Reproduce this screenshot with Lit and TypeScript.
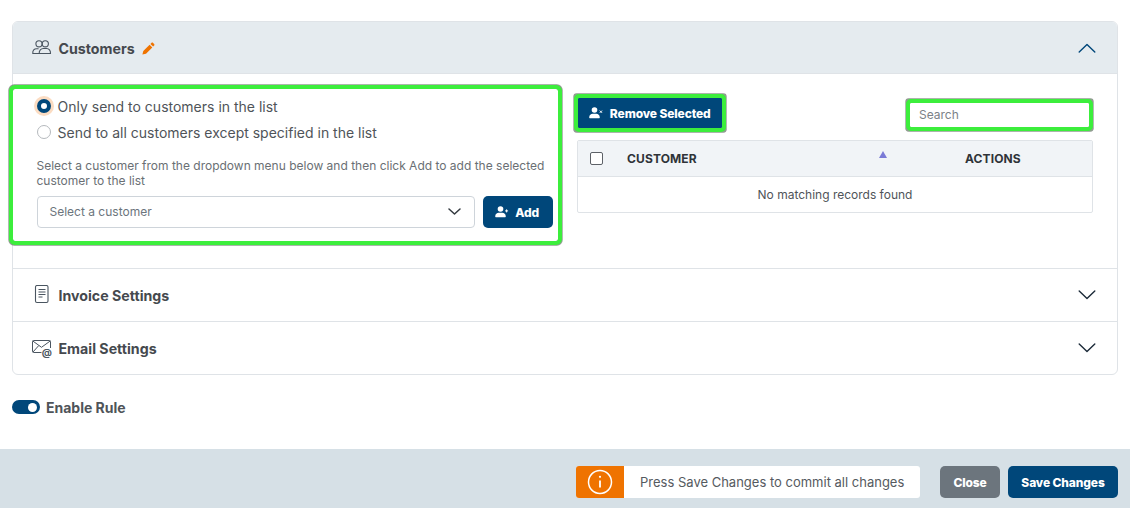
import { LitElement, html, css, svg } from "lit";
import { customElement } from "lit/decorators.js";

const chevron = (up: boolean, cls: string) => html`<svg class=${cls} width="18" height="10" viewBox="0 0 18 10" fill="none" stroke="currentColor" stroke-width="1.4" stroke-linecap="round" stroke-linejoin="round"><path d=${up ? "M1.2 9 9 1.4 16.8 9" : "M1.2 1 9 8.6 16.8 1"}></path></svg>`;

const userBase = svg`<circle cx="5.500" cy="3" r="2.800"></circle><path d="M0.200 10.600c0-2.600 1.800-3.800 3.400-3.800h3.800c1.600 0 3.400 1.200 3.400 3.800 0 .4-.3.600-.6.600H.8c-.3 0-.6-.2-.6-.6z"></path>`;
const userPlus = html`<svg class="bi" width="14" height="12" viewBox="0 0 14 12" fill="#fff">${userBase}<path d="M11.600 3.400v3M10.100 4.900h3" stroke="#fff" stroke-width="1"></path></svg>`;
const userX = html`<svg class="bi" width="14" height="12" viewBox="0 0 14 12" fill="#fff">${userBase}<path d="M10.800 3.600l2.200 2.200M13 3.600l-2.200 2.200" stroke="#fff" stroke-width="1"></path></svg>`;

@customElement("app-root")
export class AppRoot extends LitElement {
  static styles = css`
    :host { display: block; width: 1130px; height: 508px; overflow: hidden; background: #fff; font-family: Inter, "Liberation Sans", sans-serif; color: #4a4f55; box-sizing: border-box; }
    * { box-sizing: border-box; }
    .page { display: flex; flex-direction: column; height: 508px; padding-top: 21px; }
    .card { margin: 0 12px; height: 354px; border: 1px solid #dfe3e7; border-radius: 6px; display: flex; flex-direction: column; }
    .acc { height: 53px; flex: none; display: flex; align-items: center; padding: 0 21px 0 19px; border-top: 1px solid #dfe3e7; font-size: 14.2px; font-weight: 700; color: #45494e; }
    .acc.first { height: 52px; border-top: 0; padding-top: 1px; background: #e5ebef; border-bottom: 1px solid #dfe3e7; border-radius: 5px 5px 0 0; }
    .acc.last { border-bottom: 0; }
    .acc .ic { width: 20px; height: 20px; margin-right: 6.5px; flex: none; }
    .pencil { margin-left: 7px; }
    .chev { margin-left: auto; color: #1c2b39; }
    .chev.open { color: #00477a; }
    .body { height: 194px; flex: none; display: flex; align-items: flex-start; padding: 11px 24px 0 0; }
    .hl { outline: 4px solid #3cee3c; outline-offset: 0; box-shadow: 0 0 0 4.7px rgba(70, 90, 70, 0.6); border-radius: 2px; }
    .left { width: 545px; height: 152px; margin: 4px 0 0 0; padding: 4px 5px 0 23.5px; flex: none; }
    .radio { display: flex; align-items: center; height: 26px; font-size: 14px; color: #4f5459; }
    .dot { width: 14px; height: 14px; border-radius: 50%; border: 1px solid #b5b9bd; margin-right: 7px; flex: none; background: #fff; }
    .dot.on { border: 4px solid #00477a; box-shadow: 0 0 0 3px #fbdcc2; }
    .hint { font-size: 12px; line-height: 15px; color: #6a6f74; margin-top: 13px; }
    .sel-row { display: flex; gap: 8px; margin-top: 8px; }
    .select { flex: 1; height: 32px; border: 1px solid #ced4da; border-radius: 4px; display: flex; align-items: center; padding: 0 13px 1px 12px; font-size: 12px; color: #6c757d; }
    .select .chev2 { margin-left: auto; color: #343a40; width: 13px; height: 7px; }
    .btn { border: 0; background: #00477a; color: #fff; font: 800 12px Inter, "Liberation Sans", sans-serif; letter-spacing: -0.01em; border-radius: 5px; display: flex; align-items: center; justify-content: center; height: 32px; padding: 0; }
    .btn .bi { margin-right: 6.500px; }
    .add { width: 70px; padding-right: 2px; }
    .right { flex: 1; margin-left: 16px; margin-top: 13px; }
    .tools { display: flex; justify-content: space-between; align-items: flex-start; height: 30px; margin-left: 4px; margin-right: 4px; }
    .rm { width: 144px; height: 30px; border-radius: 1px; }
    .search { width: 179px; height: 24px; margin-top: 5px; display: flex; align-items: center; padding: 0 9px 2px; font-size: 12px; color: #7b8187; background: #fff; border-radius: 1px; }
    .table { margin-top: 12px; border: 1px solid #dfe3e7; border-radius: 2px; margin-left: 3px; }
    .thead { height: 36px; background: #f1f4f7; border-bottom: 1px solid #dfe3e7; display: flex; align-items: center; font-size: 12px; font-weight: 700; color: #2f3338; }
    .check { width: 13px; height: 13px; border: 1px solid #5d6167; border-radius: 2px; background: #fff; margin-left: 12px; flex: none; }
    .th1 { margin-left: 24px; width: 338px; letter-spacing: .01em; display: flex; justify-content: flex-end; align-self: stretch; }
    .th1 span { margin-right: auto; align-self: center; }
    .tri { width: 0; height: 0; border-left: 4.5px solid transparent; border-right: 4.5px solid transparent; border-bottom: 7px solid #7a7ad6; margin: 10px 78px 0 0; }
    .th2 { letter-spacing: .01em; }
    .empty { height: 35px; display: flex; align-items: center; justify-content: center; font-size: 12px; color: #4f5459; }
    .enable { display: flex; align-items: center; margin: 24px 12px 0; height: 16px; font-size: 14px; font-weight: 700; color: #4f5459; }
    .toggle { width: 28px; height: 14px; border-radius: 7px; background: #00477a; margin-right: 6px; display: flex; justify-content: flex-end; align-items: center; padding-right: 3px; }
    .toggle i { width: 9px; height: 9px; background: #fff; border-radius: 50%; }
    .footer { margin-top: auto; height: 59px; background: #d6e0e6; display: flex; align-items: center; justify-content: flex-end; padding: 7px 12px 0 0; gap: 8px; }
    .alert { height: 32px; width: 344px; display: flex; border-radius: 3px; overflow: hidden; background: #fff; margin-right: 12px; font-size: 13px; color: #555a60; align-items: center; }
    .alert .o { width: 48px; height: 32px; background: #ef7300; display: flex; align-items: center; justify-content: center; margin-right: 16px; }
    .close { width: 60px; background: #6c757d; }
    .save { width: 110px; }
  `;

  render() {
    return html`
      <div class="page">
        <div class="card">
          <div class="acc first">
            <svg class="ic" viewBox="0 0 20 20" fill="none" stroke="#4a5560" stroke-width="1.1"><circle cx="7" cy="5.800" r="3.100"></circle><circle cx="13.300" cy="5.800" r="3.100"></circle><path d="M7.200 15.500H.8c-.3-3 1.500-4.800 3.800-4.800h2"></path><path d="M7.200 15.500h11.300c.2-3-1.600-5-3.800-5h-3.400c-2.300 0-4.300 2-4.100 5z"></path></svg>
            Customers
            <svg class="pencil" width="13" height="13" viewBox="0 0 13 13" fill="#ef7300"><path d="M0.400 12.600l.9-3.600 6.300-6.300 2.700 2.700-6.300 6.300zM8.400 1.900l1-1c.5-.5 1.200-.5 1.700 0l1 1c.5.5.5 1.200 0 1.700l-1 1z"></path></svg>
            ${chevron(true, "chev open")}
          </div>
          <div class="body">
            <div class="left hl">
              <div class="radio"><span class="dot on"></span>Only send to customers in the list</div>
              <div class="radio"><span class="dot"></span>Send to all customers except specified in the list</div>
              <div class="hint">Select a customer from the dropdown menu below and then click Add to add the selected customer to the list</div>
              <div class="sel-row">
                <div class="select">Select a customer
                  <svg class="chev2" viewBox="0 0 13 7" fill="none" stroke="currentColor" stroke-width="1.5" stroke-linecap="round" stroke-linejoin="round"><path d="M1 1l5.500 5L12 1"></path></svg>
                </div>
                <button class="btn add">${userPlus}Add</button>
              </div>
            </div>
            <div class="right">
              <div class="tools">
                <button class="btn rm hl">${userX}Remove Selected</button>
                <div class="search hl">Search</div>
              </div>
              <div class="table">
                <div class="thead">
                  <span class="check"></span>
                  <div class="th1"><span>CUSTOMER</span><i class="tri"></i></div>
                  <div class="th2">ACTIONS</div>
                </div>
                <div class="empty">No matching records found</div>
              </div>
            </div>
          </div>
          <div class="acc">
            <svg class="ic" viewBox="0 0 20 20" fill="none" stroke="#4a5560" stroke-width="1.100"><rect x="3.500" y="0.500" width="12.500" height="17" rx="1.500"></rect><path d="M6.500 4.500h7M6.500 7h7M6.500 9.500h7M6.500 12h4" stroke-width="1"></path></svg>
            Invoice Settings
            ${chevron(false, "chev")}
          </div>
          <div class="acc last">
            <svg class="ic" viewBox="0 0 20 20" fill="none" stroke="#4a5560" stroke-width="1"><path d="M9.500 14.500H1.500a1 1 0 0 1-1-1V3.500a1 1 0 0 1 1-1h16a1 1 0 0 1 1 1v6.500"></path><path d="M.8 3l8.700 6.300L18.200 3M1 14l5.800-6.500"></path><text x="9.800" y="18.200" font-size="10" font-family="Inter, sans-serif" fill="#4a5560" stroke="none">@</text></svg>
            Email Settings
            ${chevron(false, "chev")}
          </div>
        </div>
        <div class="enable"><span class="toggle"><i></i></span>Enable Rule</div>
        <div class="footer">
          <div class="alert">
            <div class="o"><svg width="26" height="26" viewBox="0 0 26 26" fill="none" stroke="#fff" stroke-width="1.500"><circle cx="13" cy="13" r="11.500"></circle><path d="M13 11.500v7" stroke-width="1.800"></path><circle cx="13" cy="7.800" r="1.100" fill="#fff" stroke="none"></circle></svg></div>
            Press Save Changes to commit all changes
          </div>
          <button class="btn close">Close</button>
          <button class="btn save">Save Changes</button>
        </div>
      </div>
    `;
  }
}
